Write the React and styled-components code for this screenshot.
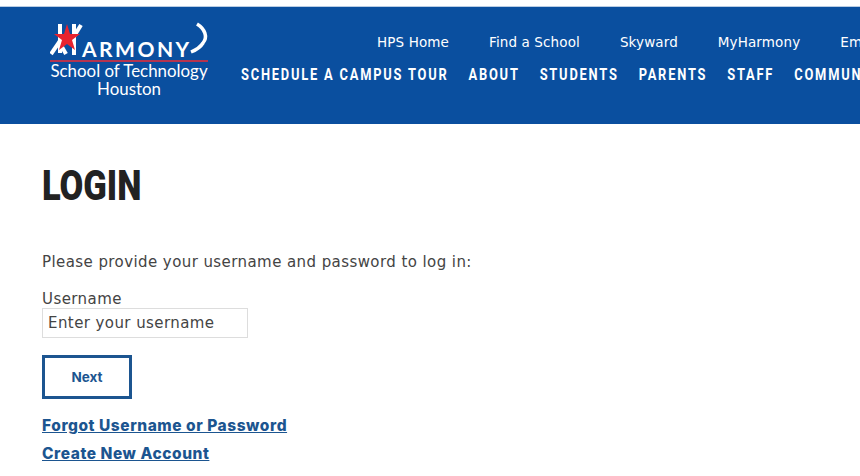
import React from 'react'
import styled, { createGlobalStyle } from 'styled-components'

const Global = createGlobalStyle`
  html, body { margin: 0; padding: 0; background: #fff; overflow: hidden; }
  body { font-family: "DejaVu Sans", sans-serif; color: #333; }
`

const Page = styled.div`
  width: 860px;
  height: 476px;
  overflow: hidden;
  padding-top: 6px;
  box-sizing: border-box;
`

const Header = styled.header`
  height: 118px;
  background: #0a4f9f;
  border-top: 1px solid #b9cde4;
  box-sizing: border-box;
  display: flex;
  padding-left: 50px;
  overflow: hidden;
`

const Logo = styled.div`
  position: relative;
  width: 158px;
  flex: none;
  padding-top: 32px;
  color: #fff;
  text-align: center;
`

const LogoWord = styled.div`
  font-family: "Lato", sans-serif;
  font-size: 21px;
  line-height: 20px;
  letter-spacing: 2.5px;
  font-weight: 700;
  padding-left: 32px;
  text-align: left;
  white-space: nowrap;
`

const LogoRule = styled.div`
  height: 2px;
  background: #b5344f;
  margin-top: 1px;
`

const LogoLine = styled.div`
  font-family: "Lato", sans-serif;
  font-size: 16.9px;
  line-height: 18px;
  white-space: nowrap;
  &:first-of-type { margin-top: 2px; }
`

const LogoArt = styled.svg`
  position: absolute;
  left: 0;
  top: 0;
`

const Navs = styled.div`
  margin-left: 33px;
  flex: none;
  display: flex;
  flex-direction: column;
`

const TopNav = styled.nav`
  display: flex;
  gap: 40px;
  margin-left: 136px;
  margin-top: 25px;
`

const TopLink = styled.a`
  color: #fff;
  font-size: 13.5px;
  line-height: 20px;
  letter-spacing: 0.12px;
  white-space: nowrap;
`

const MainNav = styled.nav`
  display: flex;
  gap: 25.6px;
  margin-top: 13px;
  transform: scaleX(0.78);
  transform-origin: left center;
`

const MainLink = styled.a`
  color: #fff;
  font-family: "Roboto", sans-serif;
  font-weight: 700;
  font-size: 16.5px;
  line-height: 20px;
  letter-spacing: 2.3px;
  white-space: nowrap;
`

const Content = styled.main`
  padding: 38px 0 0 42px;
`

const Title = styled.h1`
  margin: 0;
  font-family: "Roboto", sans-serif;
  font-weight: 900;
  font-size: 42px;
  line-height: 48px;
  color: #222;
  transform: scaleX(0.82);
  transform-origin: left center;
`

const Intro = styled.p`
  margin: 40px 0 0;
  font-size: 15px;
  line-height: 24px;
  letter-spacing: 0.42px;
  color: #444;
`

const Label = styled.label`
  display: block;
  margin-top: 16px;
  font-size: 15px;
  line-height: 18px;
  letter-spacing: 0.42px;
  color: #444;
`

const Input = styled.input`
  display: block;
  width: 206px;
  height: 30px;
  box-sizing: border-box;
  margin-top: 0;
  padding: 0 5px;
  border: 1px solid #ddd;
  font: 15px "DejaVu Sans", sans-serif;
  letter-spacing: 0.42px;
  &::placeholder { color: #444; opacity: 1; }
`

const Button = styled.button`
  display: block;
  width: 90px;
  height: 44px;
  margin-top: 17px;
  background: #fff;
  border: 3px solid #1c5590;
  color: #1c5590;
  font: 700 13.5px "Inter", sans-serif;
`

const Links = styled.div`
  display: flex;
  flex-direction: column;
  gap: 8px;
  margin-top: 17px;
`

const TextLink = styled.a`
  font-family: "Inter", sans-serif;
  color: #1c5590;
  font-size: 15.5px;
  line-height: 20px;
  font-weight: 800;
  letter-spacing: 0.55px;
  text-decoration: underline;
`

const LogoDrawing = () => (
  <LogoArt width="160" height="60" viewBox="0 0 160 60">
    <g stroke="#fff" strokeWidth="4" fill="none">
      <path d="M10 17 V46" />
      <path d="M24 17 V48" />
      <path d="M1 47 L12 31" />
      <path d="M23 31 L31 18" />
      <path d="M12 40 L16 47" />
    </g>
    <path d="M147 17 C155 22 158 30 153 36 C150 41 146 43 141 45" stroke="#fff" strokeWidth="3.5" fill="none" />
    <polygon points="17,17 20,27 30,27 22,33 25,43 17,37 9,43 12,33 4,27 14,27" fill="#e8232f" />
  </LogoArt>
)

export default function App() {
  return (
    <Page>
      <Global />
      <Header>
        <Logo>
          <LogoDrawing />
          <LogoWord>ARMONY</LogoWord>
          <LogoRule />
          <LogoLine>School of Technology</LogoLine>
          <LogoLine>Houston</LogoLine>
        </Logo>
        <Navs>
          <TopNav>
            <TopLink>HPS Home</TopLink>
            <TopLink>Find a School</TopLink>
            <TopLink>Skyward</TopLink>
            <TopLink>MyHarmony</TopLink>
            <TopLink>Email</TopLink>
          </TopNav>
          <MainNav>
            <MainLink>SCHEDULE A CAMPUS TOUR</MainLink>
            <MainLink>ABOUT</MainLink>
            <MainLink>STUDENTS</MainLink>
            <MainLink>PARENTS</MainLink>
            <MainLink>STAFF</MainLink>
            <MainLink>COMMUNITY</MainLink>
          </MainNav>
        </Navs>
      </Header>
      <Content>
        <Title>LOGIN</Title>
        <Intro>Please provide your username and password to log in:</Intro>
        <Label htmlFor="username">Username</Label>
        <Input id="username" placeholder="Enter your username" />
        <Button>Next</Button>
        <Links>
          <TextLink>Forgot Username or Password</TextLink>
          <TextLink>Create New Account</TextLink>
        </Links>
      </Content>
    </Page>
  )
}
